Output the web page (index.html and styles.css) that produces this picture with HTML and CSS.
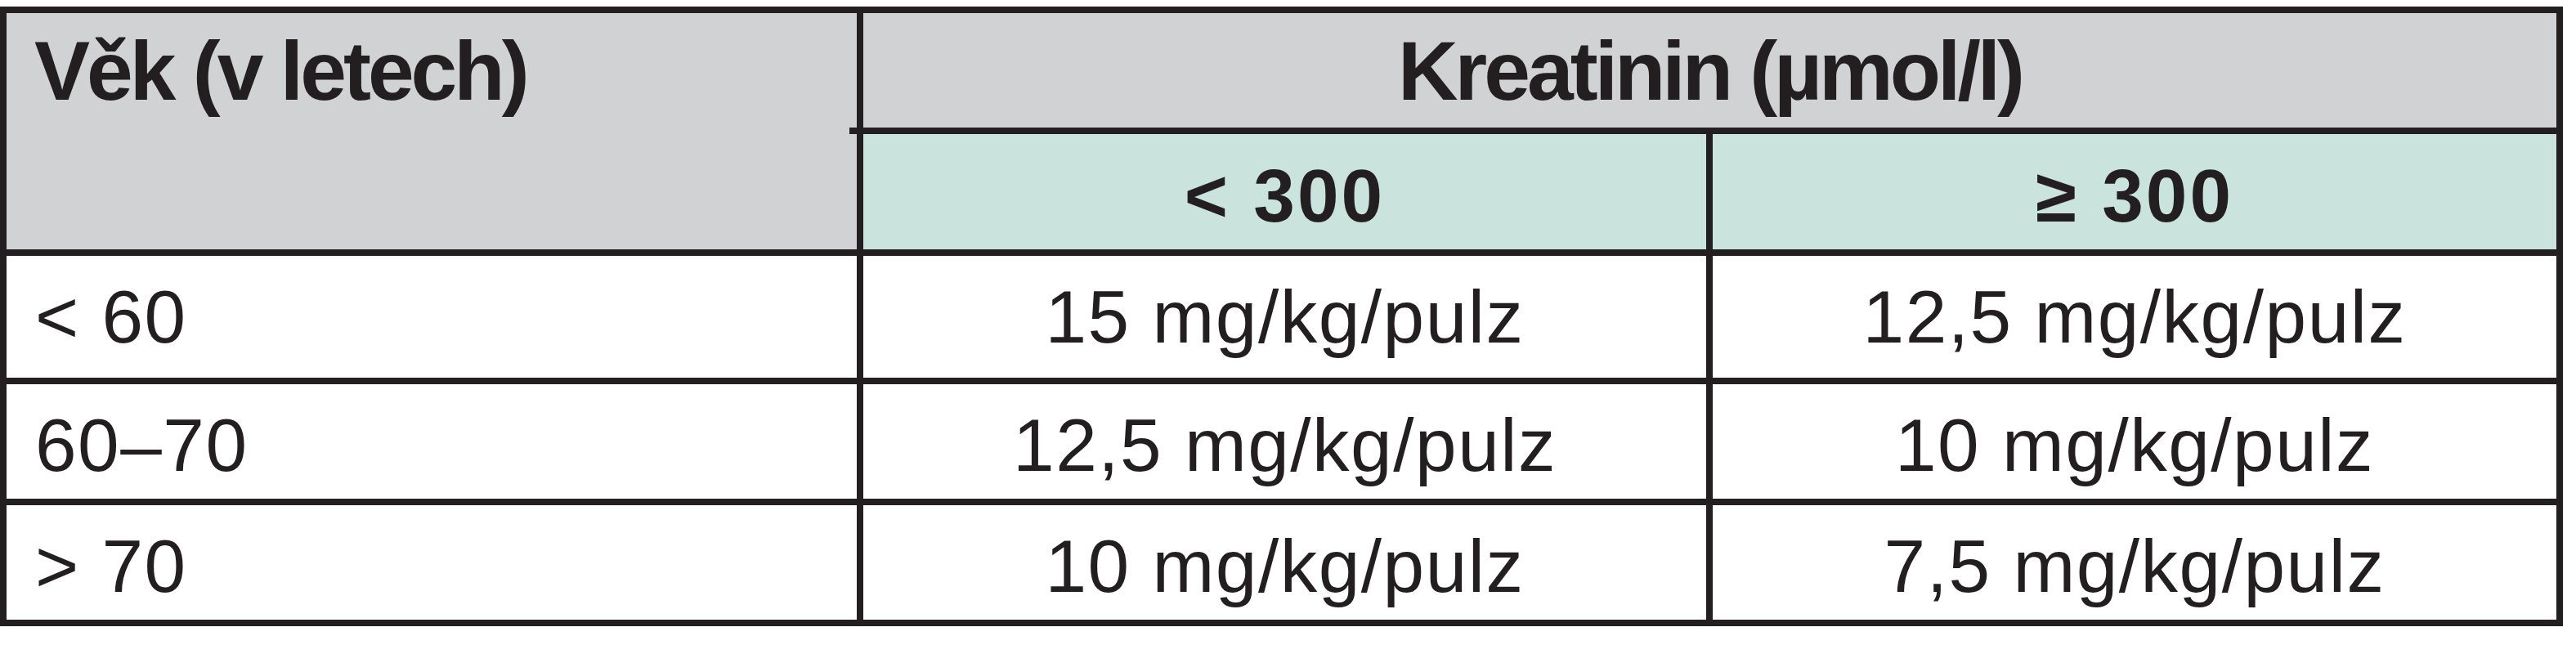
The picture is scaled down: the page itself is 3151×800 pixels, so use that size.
FILE: index.html
```html
<!DOCTYPE html>
<html lang="cs">
<head>
<meta charset="utf-8">
<title>Dávkování podle věku a kreatininu</title>
<link rel="stylesheet" href="styles.css">
</head>
<body>
<div class="table">
  <div class="cell head age">Věk (v letech)</div>
  <div class="cell head group">Kreatinin (µmol/l)</div>
  <div class="cell sub">&lt; 300</div>
  <div class="cell sub">≥ 300</div>

  <div class="cell label">&lt; 60</div>
  <div class="cell value">15 mg/kg/pulz</div>
  <div class="cell value">12,5 mg/kg/pulz</div>

  <div class="cell label">60–70</div>
  <div class="cell value">12,5 mg/kg/pulz</div>
  <div class="cell value">10 mg/kg/pulz</div>

  <div class="cell label">&gt; 70</div>
  <div class="cell value">10 mg/kg/pulz</div>
  <div class="cell value">7,5 mg/kg/pulz</div>
</div>
</body>
</html>
```
FILE: styles.css
```css
html, body {
  margin: 0;
  padding: 0;
  background: #ffffff;
}

body {
  padding-top: 8px;
  font-family: "Liberation Sans", Arial, sans-serif;
  color: #231f20;
}

.table {
  display: grid;
  width: max-content;
  grid-template-columns: 1040px 1031px 1032px;
  grid-template-rows: 140px 141px 149px 140px 140px;
  gap: 8px;
  padding: 8px;
  background: #231f20;
}

.cell {
  display: flex;
  align-items: flex-start;
  background: #ffffff;
  line-height: 1.15;
  white-space: nowrap;
}

.head {
  background: #d1d2d4;
  font-weight: bold;
  font-size: 102px;
  letter-spacing: -4px;
  padding-top: 13px;
}

.age {
  grid-row: 1 / span 2;
  padding-left: 34px;
}

.group {
  grid-column: 2 / span 2;
  justify-content: center;
  position: relative;
}

.group::before {
  content: "";
  position: absolute;
  left: -17px;
  top: 100%;
  width: 9px;
  height: 8px;
  background: #231f20;
}

.sub {
  background: #cbe3dd;
  font-weight: bold;
  font-size: 91px;
  letter-spacing: 3px;
  justify-content: center;
  padding-top: 24px;
}

.label,
.value {
  font-size: 91px;
  padding-top: 23px;
  letter-spacing: 1.5px;
}

.label {
  padding-left: 35px;
}

.value {
  justify-content: center;
}
```
